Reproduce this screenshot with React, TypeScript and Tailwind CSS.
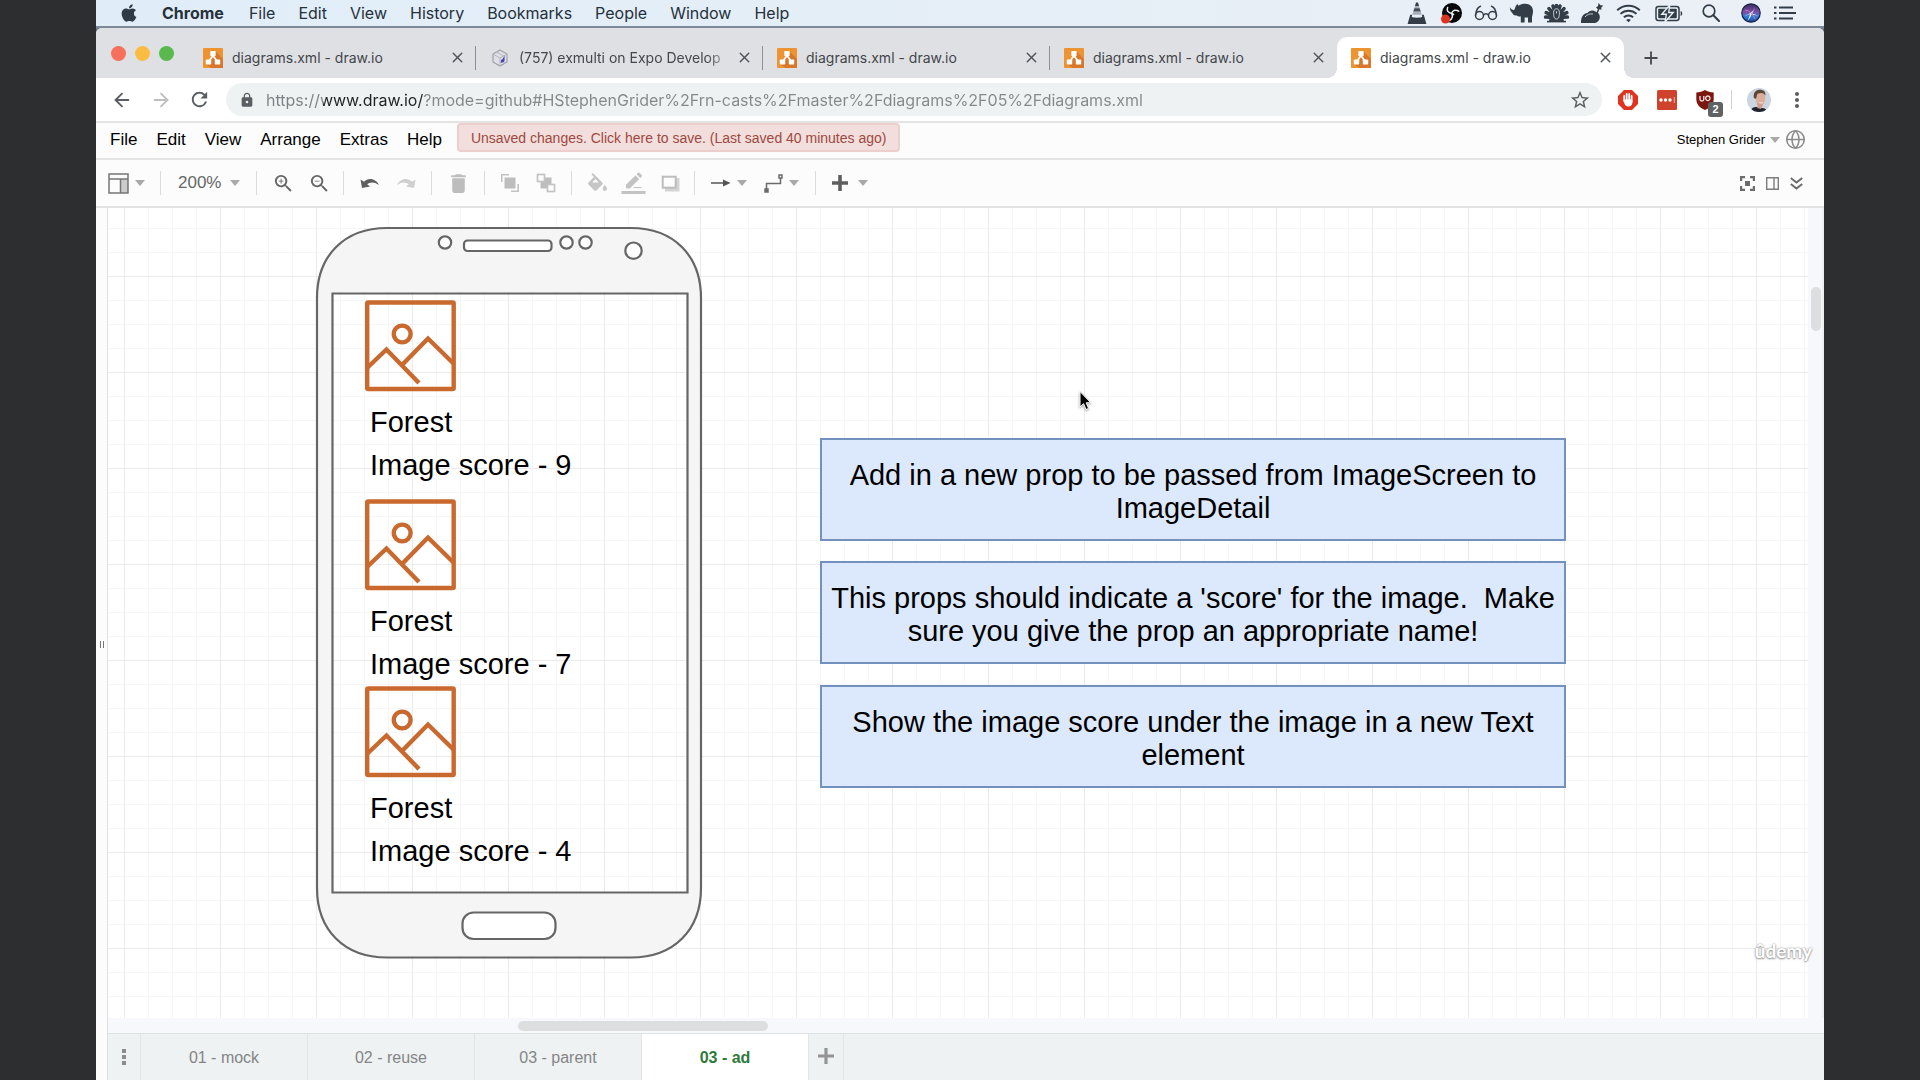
import React from "react";
import { FaApple } from "react-icons/fa";
import { MdLock, MdRefresh, MdStarBorder, MdZoomIn, MdZoomOut, MdDelete, MdMoreVert } from "react-icons/md";
import { ArrowLeft, ArrowRight, Plus, X, Globe } from "lucide-react";

type Children = { children: React.ReactNode };

/* ---------- macOS menu bar ---------- */

const menus = ["File", "Edit", "View", "History", "Bookmarks", "People", "Window", "Help"];

function Cell({ width, label, children }: Children & { width: string; label: string }) {
  return (
    <button type="button" aria-label={label} className={"flex shrink-0 items-center justify-center " + width}>
      {children}
    </button>
  );
}

function StatusIcons() {
  return (
    <div className="flex h-full items-center pr-[26px] text-[#333d48]">
      <Cell width="w-[34px]" label="VLC">
        <svg width="20" height="22" viewBox="0 0 20 22" fill="currentColor">
          <path d="M9 0.5h2l1 3.5H8z" />
          <path d="M7.3 6.2h5.4l1 3.4H6.3z" opacity=".9" />
          <path d="M8 4h4l.7 2.2H7.3zM6.3 9.6h7.4l1 3.2H5.3z" opacity=".35" />
          <path d="M3.2 12.8h2.1l-.6 1.8c0 1.6 10.600 1.6 10.600 0l-.6-1.8h2.100L19.400 22H.6z" />
        </svg>
      </Cell>
      <Cell width="w-[34px]" label="OBS">
        <svg width="22" height="22" viewBox="0 0 22 22">
          <circle cx="12" cy="11" r="10" fill="#05070a" />
          <path d="M11.500 11.200C8 11 6.500 8.500 7.600 5.500M11.500 11.200C13 8 16 7.300 18.700 9.200M11.500 11.200c1.700 3 .8 5.700-2 7.300M11.500 11.200l2 1.300" fill="none" stroke="#e8edf3" strokeWidth="1.500" strokeLinecap="round" />
          <circle cx="5.500" cy="17" r="4.500" fill="#dd3420" />
        </svg>
      </Cell>
      <Cell width="w-[36px]" label="Reader glasses">
        <svg width="24" height="16" viewBox="0 0 24 16" fill="none" stroke="currentColor" strokeWidth="1.500" strokeLinecap="round">
          <circle cx="5.500" cy="10.500" r="4" />
          <circle cx="18.500" cy="10.500" r="4" />
          <path d="M9.500 10c1.200-1.600 3.800-1.600 5 0M1.600 10C2 6 4 2 6.500 1.200M22.400 10C22 6 20 2 17.500 1.200" />
        </svg>
      </Cell>
      <Cell width="w-[34px]" label="Rhino">
        <svg width="25" height="20" viewBox="0 0 25 20" fill="currentColor">
          <path d="M.8 4.200c1.400 2.300 3 3.200 4.600 2.600L6.800 3l1.500-2 1.300 1.700C12 1 15 .4 18 .9c3.600.6 6 3.200 6 7 0 2.400-.5 4-1 6v5.600h-4v-5h-3.400v5H11.800v-6.300c-1.600.4-3 .2-4-.7L5 12.200 3 9.800C1.600 8.200.8 6.400.8 4.200z" />
        </svg>
      </Cell>
      <Cell width="w-[36px]" label="Turkey">
        <svg width="27" height="20" viewBox="0 0 27 20" fill="none" stroke="currentColor">
          <path strokeWidth="3.600" strokeLinecap="round" d="M10 14.500L2.600 14M10 12.500L3.200 9.600M11 11L6 5.600M12.500 10L10 3M17 14.500l7.400-.5M17 12.500l6.800-2.900M16 11l5-5.400M14.500 10L17 3M13.500 9V2.500" />
          <path fill="currentColor" strokeWidth="0" d="M6 18.500c0-3.500 3-7 7.500-7s7.500 3.500 7.500 7z" />
          <path stroke="#e9f0f7" strokeWidth=".8" d="M10.600 9.500c0-5 5.800-5 5.800 0 0 5-1 6.500-2.900 6.500s-2.900-1.500-2.900-6.500z" fill="currentColor" />
          <path fill="#e9f0f7" stroke="none" d="M12.700 8.500h1.600l-.8 2.500z" />
          <path strokeWidth="1.600" d="M4 18.600h19" />
        </svg>
      </Cell>
      <Cell width="w-[36px]" label="Roast">
        <svg width="24" height="22" viewBox="0 0 24 22" fill="currentColor">
          <path d="M1 20.500C1 15 3 11.500 7.500 11c2-3 6-3.500 9-.8l1.400-3L16 5.600l2-1.700.6-3 1.800 2.300 2.800.2-2 2.300.3 2-2-.5-1.500 3.500C22 14.800 19 20.500 14.500 21H1z" />
          <path d="M5 15c2-2.500 5-3.500 8-3" stroke="#e9f0f7" strokeWidth=".8" fill="none" />
        </svg>
      </Cell>
      <Cell width="w-[36px]" label="Wi-Fi">
        <svg width="25" height="19" viewBox="0 0 25 19" fill="none" stroke="currentColor" strokeWidth="1.900">
          <path d="M1.200 6.300c6.300-6 16.300-6 22.600 0M4.500 9.900c4.500-4.200 11.500-4.200 16 0M7.900 13.300c2.600-2.400 6.600-2.400 9.200 0" />
          <path d="M12.500 18.300l-2.300-2.400c1.300-1.200 3.300-1.200 4.600 0z" fill="currentColor" stroke="none" />
        </svg>
      </Cell>
      <Cell width="w-[46px]" label="Battery charging">
        <svg width="28" height="17" viewBox="0 0 28 17">
          <rect x="1" y="1.500" width="23" height="14" rx="2.500" fill="none" stroke="currentColor" strokeWidth="1.500" />
          <rect x="3.200" y="3.700" width="18.600" height="9.600" rx=".8" fill="currentColor" />
          <path d="M25.600 6v5c2.200-.5 2.200-4.500 0-5z" fill="currentColor" />
          <path d="M14.800 0L6.800 9.300h4.600L10 17l8.200-9.500h-4.500z" fill="currentColor" stroke="#eaf0f7" strokeWidth="1.400" />
        </svg>
      </Cell>
      <Cell width="w-[38px]" label="Spotlight">
        <svg width="18" height="18" viewBox="0 0 18 18" fill="none" stroke="currentColor" strokeWidth="1.700" strokeLinecap="round">
          <circle cx="7" cy="7" r="5.800" />
          <path d="M11.300 11.300L17 17" strokeWidth="2" />
        </svg>
      </Cell>
      <Cell width="w-[42px]" label="Siri">
        <svg width="20" height="20" viewBox="0 0 20 20">
          <defs>
            <linearGradient id="siri" x1="0" y1="0" x2="0" y2="1">
              <stop offset="0" stopColor="#3a2d63" />
              <stop offset=".45" stopColor="#7a4fa8" />
              <stop offset=".7" stopColor="#2f7fd8" />
              <stop offset="1" stopColor="#1b3f94" />
            </linearGradient>
          </defs>
          <circle cx="10" cy="10" r="9.200" fill="url(#siri)" stroke="#1a2340" strokeWidth="1.200" />
          <path d="M3 12.500c3-.5 5-1.500 7-3 2-1 3-3 4-5-1 3-2 4.500-3 6 2 1 4 1 6 2-3 0-5-.5-6.500-1.200-.5 2.200-2 4.700-4 6.200 1.500-2.500 2.200-4.500 2.500-6.500-2 1-4 1.500-6 1.500z" fill="#f2f8ff" />
          <path d="M4 7c3 .5 4.500 1.500 6 3 1.500 1.500 3 3.500 4 6" stroke="#d670c0" strokeWidth="1" fill="none" />
        </svg>
      </Cell>
      <Cell width="w-[26px]" label="Notification centre">
        <svg width="22" height="14" viewBox="0 0 22 14" stroke="currentColor" strokeWidth="2.200">
          <path d="M0 1.500h2.500M5 1.500h14M0 7h2.500M5 7h17M0 12.500h2.500M5 12.500h14" />
        </svg>
      </Cell>
    </div>
  );
}

function SystemBar() {
  return (
    <header className="flex h-[28px] shrink-0 items-center justify-between border-b-2 border-[#7e8997] bg-linear-to-r from-[#e0edf8] to-[#ebf0f6] font-['Inter',sans-serif] text-base text-[#26313c]">
      <nav aria-label="System menu" className="flex items-center gap-[23px] pl-[23px]">
        <button type="button" aria-label="Apple menu" className="text-[#2f3b47]">
          <FaApple size={20} />
        </button>
        <button type="button" className="mr-[2px] font-bold">Chrome</button>
        {menus.map((m) => (
          <button type="button" key={m}>{m}</button>
        ))}
      </nav>
      <StatusIcons />
    </header>
  );
}

/* ---------- Browser chrome ---------- */

function DrawioLogo() {
  return (
    <svg width="20" height="20" viewBox="0 0 20 20" className="shrink-0">
      <rect width="20" height="20" rx="1" fill="#ec9332" />
      <path d="M12.500 3.500L20 11v9H8.500l-5-3.500z" fill="#d9772a" />
      <path d="M10 7.500L5.500 14M10 7.500l4.500 6.500" stroke="#fff" strokeWidth="1.800" />
      <rect x="7.300" y="3" width="5.400" height="5" rx=".7" fill="#fff" />
      <rect x="2.800" y="11.500" width="5.400" height="5" rx=".7" fill="#fff" />
      <rect x="11.800" y="11.500" width="5.400" height="5" rx=".7" fill="#fff" />
    </svg>
  );
}

function ExpoLogo() {
  return (
    <svg width="20" height="20" viewBox="0 0 20 20" fill="none" className="shrink-0">
      <path d="M10 2l7 4v8l-7 4-7-4V6z" stroke="#9da0aa" strokeWidth="1.200" />
      <path d="M3 6l7 4 7-4M10 10v8M6 4l8 4v8" stroke="#b4b7c0" />
      <path d="M14.500 7.500v4.500c0 2.200-2 3-3.800 2.600l.3-2.600c1.500-.5 2.500-2 3.500-4.500z" fill="#4a45b5" />
    </svg>
  );
}

const tabs = [
  { title: "diagrams.xml - draw.io", expo: false },
  { title: "(757) exmulti on Expo Develop", expo: true },
  { title: "diagrams.xml - draw.io", expo: false },
  { title: "diagrams.xml - draw.io", expo: false },
  { title: "diagrams.xml - draw.io", expo: false },
];

function BrowserTab({ title, expo, active, divided }: { title: string; expo: boolean; active: boolean; divided: boolean }) {
  return (
    <div className={"relative flex h-[41px] max-w-[287px] min-w-0 flex-1 items-center pr-[10px] pl-[14px] " + (active ? "rounded-t-[10px] bg-white" : "")}>
      {active && (
        <>
          <span className="absolute bottom-0 -left-[10px] size-[10px] bg-[radial-gradient(circle_at_0_0,transparent_10px,white_10px)]" />
          <span className="absolute -right-[10px] bottom-0 size-[10px] bg-[radial-gradient(circle_at_100%_0,transparent_10px,white_10px)]" />
        </>
      )}
      <button type="button" className="flex min-w-0 flex-1 items-center gap-[9px]">
        {expo ? <ExpoLogo /> : <DrawioLogo />}
        <span className={"min-w-0 flex-1 text-left whitespace-nowrap " + (expo ? "[mask-image:linear-gradient(to_right,black_88%,transparent)]" : "")}>{title}</span>
      </button>
      <button type="button" aria-label={"Close " + title} className="ml-[2px] flex w-[18px] justify-center text-[#505357]">
        <X size={17} strokeWidth={2} />
      </button>
      {divided && <span className="absolute top-[9px] right-0 h-6 w-px bg-[#8d9095]" />}
    </div>
  );
}

function TabStrip() {
  return (
    <div className="flex h-[50px] items-end bg-[#dfe0e4] pl-[15px] font-['Inter',sans-serif] text-sm text-[#43464a]">
      <div className="mr-[15px] flex h-full shrink-0 items-center gap-[9px]">
        <button type="button" aria-label="Close window" className="size-[15px] rounded-full bg-[#f7705b]" />
        <button type="button" aria-label="Minimise window" className="size-[15px] rounded-full bg-[#fbbc42]" />
        <button type="button" aria-label="Zoom window" className="size-[15px] rounded-full bg-[#59b94f]" />
      </div>
      {tabs.map((t, i) => (
        <BrowserTab key={i} title={t.title} expo={t.expo} active={i === 4} divided={i < 3} />
      ))}
      <button type="button" aria-label="New tab" className="ml-[17px] flex h-[41px] items-center text-[#46494d]">
        <Plus size={20} strokeWidth={2.2} />
      </button>
    </div>
  );
}

function AddressBar() {
  return (
    <div className="flex h-[45px] items-center border-b-2 border-[#e4e4e5] bg-white pr-[15px] pl-[15px] text-[#5b5e62]">
      <button type="button" aria-label="Back" className="mr-[17px]"><ArrowLeft size={22} strokeWidth={2} /></button>
      <button type="button" aria-label="Forward" className="mr-[16px] text-[#bdbfc2]"><ArrowRight size={22} strokeWidth={2} /></button>
      <button type="button" aria-label="Reload" className="mr-[15px]"><MdRefresh size={23} /></button>
      <div className="flex h-[33px] min-w-0 flex-1 items-center rounded-full bg-[#eff2f3] pr-[11px] pl-[13px]">
        <MdLock size={16} className="shrink-0" />
        <input
          aria-label="Address"
          type="text"
          defaultValue="https://www.draw.io/?mode=github#HStephenGrider%2Frn-casts%2Fmaster%2Fdiagrams%2F05%2Fdiagrams.xml"
          className="ml-[11px] min-w-0 flex-1 bg-[linear-gradient(to_right,#7d8185_57px,#202326_57px,#202326_158px,#85888b_158px)] bg-clip-text font-['Inter',sans-serif] text-base text-transparent outline-none"
        />
        <button type="button" aria-label="Bookmark this page"><MdStarBorder size={22} /></button>
      </div>
      <div className="flex shrink-0 items-center pl-[16px]">
        <button type="button" aria-label="Ad blocker" className="mr-[19px]">
          <svg width="20" height="20" viewBox="0 0 20 20">
            <path d="M6 0h8l6 6v8l-6 6H6l-6-6V6z" fill="#df3420" />
            <path d="M6.200 6v5M8.700 4v7M11.200 4v7M13.600 6v6" stroke="#fff" strokeWidth="1.800" strokeLinecap="round" />
            <path d="M5.400 9.500h9v2.500c0 3-1.500 4.500-4 4.500-2.200 0-3.300-1-4-3z" fill="#fff" />
          </svg>
        </button>
        <button type="button" aria-label="Password manager" className="mr-[19px]">
          <svg width="20" height="20" viewBox="0 0 20 20">
            <rect width="20" height="20" rx="1.500" fill="#cf432c" />
            <circle cx="4" cy="10" r="1.700" fill="#fff" />
            <circle cx="8.500" cy="10" r="1.700" fill="#fff" />
            <circle cx="13" cy="10" r="1.700" fill="#fff" />
            <path d="M17.300 7v6" stroke="#f0b5aa" />
          </svg>
        </button>
        <button type="button" aria-label="uBlock, 2 blocked" className="relative mr-[17px]">
          <svg width="18" height="20" viewBox="0 0 18 20">
            <path d="M9 0c2.500 1.600 5.500 2.300 8.700 2.400V9c0 5-3 8.500-8.700 11C3.300 17.500.3 14 .3 9V2.400C3.500 2.300 6.500 1.600 9 0z" fill="#7c1710" />
            <path d="M4 6v3.500c0 2 3.800 2 3.800 0V6M11.800 6a2.200 2.300 0 1 0 .1 0" fill="none" stroke="#f2e3e2" strokeWidth="1.300" />
          </svg>
          <span className="absolute top-[12px] left-[12px] flex h-[15px] w-[15px] items-center justify-center rounded-[3px] bg-[#5f6163] font-['Liberation_Sans',sans-serif] text-[11px] leading-none font-bold text-white">2</span>
        </button>
        <span className="mr-[15px] h-[19px] w-px bg-[#cfd1d3]" />
        <button type="button" aria-label="Profile" className="mr-[14px] overflow-hidden rounded-full">
          <svg width="24" height="24" viewBox="0 0 24 24">
            <rect width="24" height="24" fill="#cbd5e2" />
            <path d="M3 24c1-4 4-5 6-5l6 1c3 0 5 2 6 4z" fill="#1e232c" />
            <path d="M8.500 9c0-4 2-5.500 5-5.500s5 2 4.800 6c-.2 5-2.200 8.700-5 8.700S8.500 14 8.500 9z" fill="#dcae9b" />
            <path d="M10 15l.5 5 3.500 1 2-4z" fill="#cf9d89" />
            <path d="M6.800 10c-.8-6 2.500-8.300 6-8.300 4 0 6 2 5.700 6-1.500-3-4-3.500-8-2-1 1.500-.5 3-1.500 5z" fill="#5d4636" />
            <path d="M12 14c1.500 1 3 .8 4.300-.3-.5 2-3.300 2.500-4.300.3z" fill="#fff" />
          </svg>
        </button>
        <button type="button" aria-label="Browser menu"><MdMoreVert size={24} /></button>
      </div>
    </div>
  );
}

/* ---------- Diagram editor ---------- */

function Caret({ className = "" }: { className?: string }) {
  return (
    <svg width="10" height="6" viewBox="0 0 10 6" className={"pointer-events-none shrink-0 " + className}>
      <path d="M0 0h10L5 6z" fill="#a9a9a9" />
    </svg>
  );
}

function EditorMenu() {
  return (
    <div className="flex h-[37px] items-start justify-between border-b-2 border-[#e5e5e5] bg-[#fcfcfc] font-['Liberation_Sans',Arial,sans-serif] text-black">
      <nav aria-label="Editor menu" className="flex h-[34px] items-center gap-[19px] pl-[14px] text-[17px]">
        {["File", "Edit", "View", "Arrange", "Extras", "Help"].map((m) => (
          <button type="button" key={m}>{m}</button>
        ))}
        <button type="button" className="-ml-1 h-[29px] self-start rounded-[4px] border-2 border-[#eccfcd] bg-[#f2dfdd] px-3 text-sm whitespace-nowrap text-[#a04840]">
          Unsaved changes. Click here to save. (Last saved 40 minutes ago)
        </button>
      </nav>
      <div className="flex h-[33px] items-center gap-[5px] pr-[18px]">
        <button type="button" className="flex items-center gap-[5px] text-[13px]">
          Stephen Grider
          <Caret />
        </button>
        <button type="button" aria-label="Language" className="text-[#8c8c8c]"><Globe size={21} strokeWidth={1.8} /></button>
      </div>
    </div>
  );
}

function Tool({ width, label, children }: Children & { width: string; label: string }) {
  return (
    <button type="button" aria-label={label} className={"flex h-6 shrink-0 items-center justify-center gap-[6px] " + width}>
      {children}
    </button>
  );
}

function Divider() {
  return <span className="h-6 w-px shrink-0 bg-[#dcdcdc]" />;
}

function EditorToolbar() {
  return (
    <div className="flex h-[48px] items-center justify-between border-b-2 border-[#e3e3e3] bg-[#fcfcfc] font-['Liberation_Sans',Arial,sans-serif] text-[#666]">
      <div className="flex items-center pl-[11px]">
        <Tool width="w-[38px]" label="View layout">
          <svg width="21" height="21" viewBox="0 0 21 21" fill="none" stroke="#757575" strokeWidth="1.500">
            <rect x="12" y="6" width="8" height="14" fill="#ccc" stroke="none" />
            <rect x="1" y="1" width="19" height="19" />
            <path d="M1 6h19M12.500 6v14" />
          </svg>
          <Caret />
        </Tool>
        <span className="w-[15px]" />
        <Divider />
        <div className="relative mr-[16px] ml-[13px] flex items-center">
          <select aria-label="Zoom" defaultValue="200%" className="w-[66px] appearance-none bg-transparent pl-1 text-[17px] outline-none">
            <option>100%</option>
            <option>200%</option>
          </select>
          <Caret className="absolute right-0" />
        </div>
        <Divider />
        <span className="w-2" />
        <Tool width="w-[36px]" label="Zoom in"><MdZoomIn size={23} /></Tool>
        <Tool width="w-[36px]" label="Zoom out"><MdZoomOut size={23} /></Tool>
        <span className="w-[6px]" />
        <Divider />
        <span className="w-2" />
        <Tool width="w-[36px]" label="Undo">
          <svg width="20" height="12" viewBox="0 0 20 12" fill="#5f5f5f">
            <path d="M.5 2.500L2 11l8-1.500L7.200 7.300C10 4.800 14 4.500 19 8 16.500 2.500 9-.5 4 4.800z" />
          </svg>
        </Tool>
        <Tool width="w-[36px]" label="Redo">
          <svg width="20" height="12" viewBox="0 0 20 12" fill="#cfcfcf">
            <path d="M19.500 2.500L18 11l-8-1.500 2.800-2.200C10 4.800 6 4.500 1 8 3.500 2.500 11-.5 16 4.800z" />
          </svg>
        </Tool>
        <span className="w-[7px]" />
        <Divider />
        <Tool width="w-[52px]" label="Delete"><MdDelete size={25} className="text-[#bdbdbd]" /></Tool>
        <Divider />
        <span className="w-[7px]" />
        <Tool width="w-[36px]" label="To front">
          <svg width="20" height="20" viewBox="0 0 20 20" fill="none" stroke="#c3c3c3" strokeWidth="1.600">
            <path d="M9 1.800H1.800V9M11 18.200h7.200V11" />
            <rect x="4.500" y="4.500" width="11" height="11" fill="#bdbdbd" stroke="none" />
          </svg>
        </Tool>
        <Tool width="w-[36px]" label="To back">
          <svg width="20" height="20" viewBox="0 0 20 20" fill="none" stroke="#c3c3c3" strokeWidth="1.700">
            <rect x="4.500" y="4.500" width="11" height="11" fill="#bdbdbd" stroke="none" />
            <rect x="1.500" y="1.500" width="7" height="7" fill="#fcfcfc" />
            <rect x="11.500" y="11.500" width="7" height="7" fill="#fcfcfc" />
          </svg>
        </Tool>
        <span className="w-[7px]" />
        <Divider />
        <span className="w-[7px]" />
        <Tool width="w-[36px]" label="Fill colour">
          <svg width="21" height="21" viewBox="2 0 20 20" fill="#c6c6c6">
            <path d="M16.560 8.940L7.620 0 6.210 1.410l2.380 2.380-5.150 5.150c-.59.59-.59 1.540 0 2.120l5.500 5.500c.29.29.68.44 1.060.44s.77-.15 1.060-.44l5.500-5.500c.59-.58.59-1.530 0-2.120zM7 9L10 5.810 13 9zM19 11.500s-2 2.170-2 3.500c0 1.100.9 2 2 2s2-.9 2-2c0-1.330-2-3.500-2-3.500z" />
          </svg>
        </Tool>
        <Tool width="w-[36px]" label="Line colour">
          <svg width="25" height="24" viewBox="0 0 24 24" fill="#c3c3c3">
            <path d="M17.750 8L14 4.250l-9.500 9.500V17.500h3.750zm2.500-2.500c.39-.39.39-1.020 0-1.410L17.900 1.750c-.39-.39-1.020-.39-1.410 0L15 3.250 18.750 7zM12 16h8v1h-8zM0 20h24v3H0z" />
          </svg>
        </Tool>
        <Tool width="w-[38px]" label="Shadow">
          <svg width="19" height="17" viewBox="0 0 19 17">
            <path d="M4 3h14.500v13.500H4z" fill="#d4d4d4" />
            <rect x="1.700" y="1.700" width="13" height="11" fill="#fcfcfc" stroke="#bdbdbd" strokeWidth="2" />
          </svg>
        </Tool>
        <span className="w-[5px]" />
        <Divider />
        <Tool width="w-[68px]" label="Connection">
          <svg width="20" height="8" viewBox="0 0 20 8" fill="#555">
            <path d="M0 3.300h13V4.700H0zM12 0.500L19.500 4 12 7.500z" />
          </svg>
          <Caret />
        </Tool>
        <Tool width="w-[36px]" label="Waypoints">
          <svg width="19" height="19" viewBox="0 0 19 19" fill="none" stroke="#6a6a6a" strokeWidth="1.500">
            <path d="M2.500 15V9.500h14V4" />
            <rect x="1" y="15" width="3" height="3" fill="#6a6a6a" />
            <rect x="15" y="1" width="3" height="3" />
          </svg>
          <Caret />
        </Tool>
        <span className="w-[16px]" />
        <Divider />
        <Tool width="w-[68px]" label="Insert">
          <svg width="16" height="16" viewBox="0 0 16 16">
            <path d="M8 0v16M0 8h16" stroke="#5f5f5f" strokeWidth="3.600" />
          </svg>
          <Caret className="ml-1" />
        </Tool>
      </div>
      <div className="flex items-center gap-[11px] pr-[21px]">
        <button type="button" aria-label="Fullscreen">
          <svg width="15" height="15" viewBox="0 0 15 15" fill="none" stroke="#6c6c6c" strokeWidth="2.200">
            <path d="M1.100 5V1.100H5M10 1.100h3.900V5M13.900 10v3.900H10M5 13.900H1.100V10" />
            <rect x="5" y="5" width="5" height="5" fill="#6c6c6c" stroke="none" />
          </svg>
        </button>
        <button type="button" aria-label="Format panel">
          <svg width="13" height="13" viewBox="0 0 13 13" fill="none" stroke="#7d7d7d" strokeWidth="1.400">
            <path d="M.7.700h11.600v11.600H.7zM8 1v11" />
          </svg>
        </button>
        <button type="button" aria-label="Collapse">
          <svg width="13" height="13" viewBox="0 0 13 13" fill="none" stroke="#6c6c6c" strokeWidth="2">
            <path d="M.8 1l5.700 4.500L12.200 1M.8 7l5.700 4.500L12.200 7" />
          </svg>
        </button>
      </div>
    </div>
  );
}

function Phone() {
  return (
    <svg width="388" height="734" viewBox="315 226 388 734" className="absolute top-[18px] left-[207px]" fill="none" stroke="#666" strokeWidth="2.200">
      <path fill="#f5f5f5" fillRule="evenodd" d="M317 298C317 256 344 228 387 228H631C674 228 701 256 701 298V888C701 930 674 957.500 631 957.500H387C344 957.500 317 930 317 888ZM332.500 293.500V892.500H687.500V293.500Z" />
      <circle cx="445" cy="242.500" r="6.200" fill="#fff" />
      <circle cx="566.500" cy="242.500" r="6.200" fill="#fff" />
      <circle cx="585.500" cy="242.500" r="6.200" fill="#fff" />
      <circle cx="633.500" cy="250.700" r="8.200" fill="#fff" />
      <rect x="464" y="240.500" width="87.500" height="10.500" rx="3.500" fill="#fff" />
      <rect x="462.500" y="912.500" width="93" height="26.500" rx="11" fill="#fff" />
    </svg>
  );
}

const shots = [
  { place: "top-[92px]", score: 9 },
  { place: "top-[291px]", score: 7 },
  { place: "top-[478px]", score: 4 },
];

function Shot({ place, score }: { place: string; score: number }) {
  return (
    <figure className={"absolute left-[257px] " + place}>
      <svg width="92" height="92" viewBox="0 0 92 92" fill="none" stroke="#c9692e" strokeWidth="4.400">
        <rect x="2.200" y="2.500" width="86.500" height="86.500" rx="1" />
        <circle cx="37.200" cy="34" r="8.400" />
        <path d="M2.500 67.500L21.500 49.500L54 83M37.500 64.500L63 38.500L89 64" />
      </svg>
      <figcaption className="mt-[9px] pl-[5px] text-[29px] leading-[43px] whitespace-nowrap text-black">
        <p>Forest</p>
        <p>Image score - {score}</p>
      </figcaption>
    </figure>
  );
}

const notes = [
  { place: "top-[230px]", text: "Add in a new prop to be passed from ImageScreen to ImageDetail" },
  { place: "top-[353px]", text: "This props should indicate a 'score' for the image.\u00a0 Make sure you give the prop an appropriate name!" },
  { place: "top-[477px]", text: "Show the image score under the image in a new Text element" },
];

function Canvas() {
  return (
    <div className="relative min-h-0 min-w-0 flex-1 overflow-hidden bg-white bg-[linear-gradient(to_right,#ebebeb_1px,transparent_1px),linear-gradient(to_bottom,#ebebeb_1px,transparent_1px),linear-gradient(to_right,#f6f6f6_1px,transparent_1px),linear-gradient(to_bottom,#f6f6f6_1px,transparent_1px)] bg-size-[96px_96px,96px_96px,24px_24px,24px_24px] bg-position-[16px_68px,16px_68px,16px_20px,16px_20px] font-['Liberation_Sans',Arial,sans-serif]">
      <Phone />
      {shots.map((s) => (
        <Shot key={s.score} place={s.place} score={s.score} />
      ))}
      {notes.map((n) => (
        <p key={n.place} className={"absolute left-[712px] h-[103px] w-[746px] border-2 border-[#7391bf] bg-[#dce8fb] pt-[19px] text-center text-[29px] leading-[33px] text-black " + n.place}>
          {n.text}
        </p>
      ))}
      <svg width="18" height="22" viewBox="0 0 18 22" className="absolute top-[182px] left-[970px] drop-shadow-[0_1px_1px_rgba(0,0,0,0.4)]">
        <path d="M2 1.500V17l3.600-3.300L8 19.500l2.600-1.100-2.400-5.600h4.700z" fill="#000" stroke="#fff" />
      </svg>
    </div>
  );
}

const pages = ["01 - mock", "02 - reuse", "03 - parent", "03 - ad"];

function PageTabs() {
  return (
    <div role="tablist" aria-label="Pages" className="flex h-[47px] shrink-0 border-t border-[#dfe2e3] bg-[#eef2f3] font-['Liberation_Sans',Arial,sans-serif] text-base text-[#858585]">
      <button type="button" aria-label="Page list" className="flex w-[33px] items-center justify-center border-r border-[#e3e6e7]">
        <svg width="4" height="16" viewBox="0 0 4 16" fill="#8c8c8c">
          <path d="M0 0h4v4H0zM0 6h4v4H0zM0 12h4v4H0z" />
        </svg>
      </button>
      {pages.map((p, i) => (
        <button
          type="button"
          role="tab"
          aria-selected={i === 3}
          key={p}
          className={"w-[167px] border-r border-[#e3e6e7] pt-px " + (i === 3 ? "bg-white font-bold text-[#2f7a3b]" : "")}
        >
          {p}
        </button>
      ))}
      <button type="button" aria-label="Insert page" className="flex w-[35px] items-center justify-center border-r border-[#e3e6e7] pb-0.5">
        <svg width="16" height="16" viewBox="0 0 16 16">
          <path d="M8 0v16M0 8h16" stroke="#949494" strokeWidth="3.200" />
        </svg>
      </button>
    </div>
  );
}

function Editor() {
  return (
    <main className="flex min-h-0 flex-1">
      <div className="flex w-[12px] shrink-0 items-center justify-center border-r border-[#dfdfdf] bg-[#fcfcfc]">
        <svg width="4" height="7" viewBox="0 0 4 7" stroke="#777">
          <path d="M.5 0v7M3.500 0v7" />
        </svg>
      </div>
      <div className="flex min-w-0 flex-1 flex-col">
        <div className="flex min-h-0 flex-1">
          <Canvas />
          <div className="w-4 shrink-0 border-r-2 border-[#eeeff1] bg-[#f7f8fb] pt-[79px]">
            <div className="ml-[3px] h-[44px] w-[10px] rounded-full bg-[#dddee0]" />
          </div>
        </div>
        <div className="h-[15px] shrink-0 bg-[#f7f8fb] pt-[3px]">
          <div className="ml-[410px] h-[10px] w-[250px] rounded-full bg-[#dddee0]" />
        </div>
        <PageTabs />
      </div>
    </main>
  );
}

export default function App() {
  return (
    <div className="relative h-screen bg-[#2d2e30]">
      <div className="mx-auto flex h-full w-[90%] flex-col">
        <SystemBar />
        <div className="flex min-h-0 flex-1 flex-col bg-[#6d7a89]">
          <div className="flex min-h-0 flex-1 flex-col overflow-hidden rounded-t-[6px] bg-white">
            <TabStrip />
            <AddressBar />
            <EditorMenu />
            <EditorToolbar />
            <Editor />
          </div>
        </div>
      </div>
      <span className="absolute right-[108px] bottom-[117px] font-['Lato',sans-serif] text-[19px] leading-6 font-bold text-white [text-shadow:0_0_2px_#8a8a8a,0_1px_2px_#9a9a9a]">ûdemy</span>
    </div>
  );
}
